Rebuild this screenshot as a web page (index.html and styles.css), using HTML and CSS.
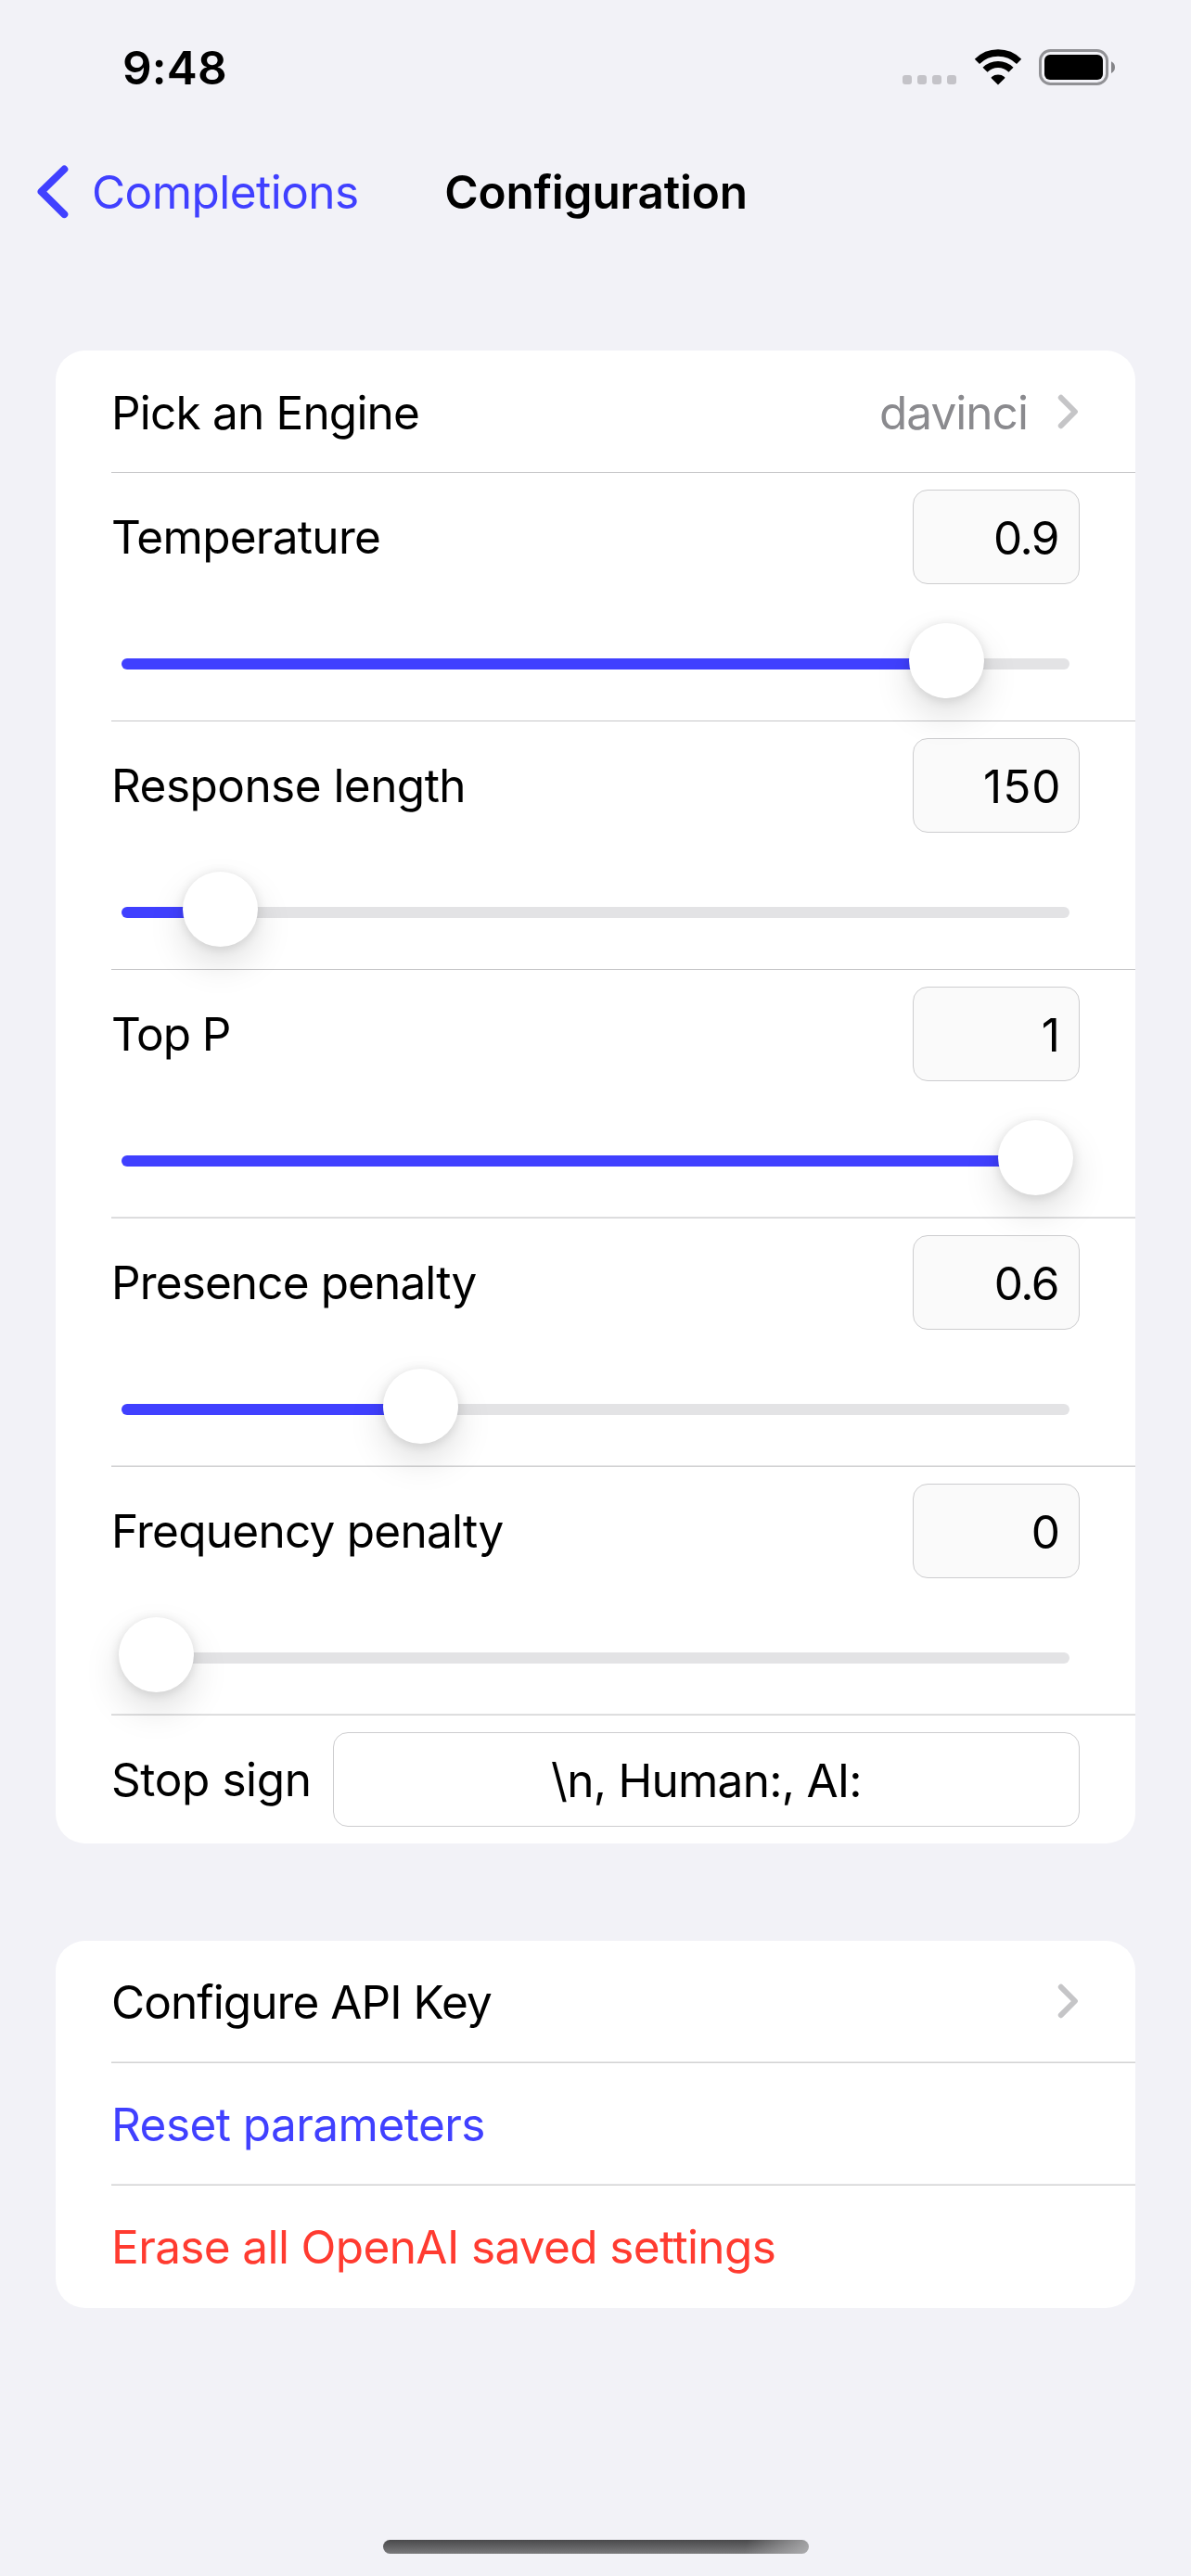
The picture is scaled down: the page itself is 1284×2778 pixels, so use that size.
FILE: index.html
```html
<!DOCTYPE html>
<html lang="en">
<head>
<meta charset="utf-8">
<title>Configuration</title>
<link rel="stylesheet" href="styles.css">
</head>
<body>
<header class="status">
  <span class="clock">9:48</span>
  <div class="indicators">
    <div class="cell"><i></i><i></i><i></i><i></i></div>
    <svg class="wifi" width="52" height="40" viewBox="0 0 52 40">
      <path d="M3.4 13.4A32 32 0 0 1 48.6 13.4" fill="none" stroke="#000" stroke-width="7.4"/>
      <path d="M12 22.2A20 20 0 0 1 40 22.2" fill="none" stroke="#000" stroke-width="7.2"/>
      <path d="M26 38.5L18.9 31.4Q18.2 30.6 19 30A11.5 11.5 0 0 1 33 30Q33.8 30.6 33.1 31.4Z"/>
    </svg>
    <svg class="battery" width="84" height="40" viewBox="0 0 84 40">
      <rect x="1.5" y="1.5" width="72" height="36" rx="11" fill="none" stroke="#919195" stroke-width="3"/>
      <rect x="6" y="6" width="63" height="27" rx="6"/>
      <path d="M78 13.2Q82 15.2 82 19.6Q82 24 78 26Z" fill="#848488"/>
    </svg>
  </div>
</header>

<nav class="nav">
  <a class="back">
    <svg width="36" height="60" viewBox="0 0 36 60"><path d="M29.3 6L4.6 30.2L29.3 54.6" transform="translate(0 -.5)"/></svg>
    <span>Completions</span>
  </a>
  <h1 class="title">Configuration</h1>
</nav>

<main class="content">
  <section class="card">
    <div class="row link">
      <span class="label engine">Pick an Engine</span>
      <span class="detail">davinci</span>
      <svg class="chevron" width="24" height="38" viewBox="0 0 24 38"><path d="M3.8 3.8L18.9 19L3.8 34.2"/></svg>
    </div>
    <div class="row param">
      <div class="head"><span class="label temperature">Temperature</span><span class="field decimal">0.9</span></div>
      <div class="slider" style="--value:.899"><div class="track"></div><div class="thumb"></div></div>
    </div>
    <div class="row param">
      <div class="head"><span class="label length">Response length</span><span class="field hundreds">150</span></div>
      <div class="slider" style="--value:.0728"><div class="track"></div><div class="thumb"></div></div>
    </div>
    <div class="row param soft">
      <div class="head"><span class="label top-p">Top P</span><span class="field">1</span></div>
      <div class="slider" style="--value:1"><div class="track"></div><div class="thumb"></div></div>
    </div>
    <div class="row param soft">
      <div class="head"><span class="label presence">Presence penalty</span><span class="field decimal">0.6</span></div>
      <div class="slider" style="--value:.3006"><div class="track"></div><div class="thumb"></div></div>
    </div>
    <div class="row param soft">
      <div class="head"><span class="label frequency">Frequency penalty</span><span class="field">0</span></div>
      <div class="slider" style="--value:0"><div class="track"></div><div class="thumb"></div></div>
    </div>
    <div class="row stop">
      <div class="head"><span class="label sign">Stop sign</span><span class="field wide">\n, Human:, AI:</span></div>
    </div>
  </section>

  <section class="card actions">
    <div class="row link soft">
      <span class="label api">Configure API Key</span>
      <svg class="chevron" width="24" height="38" viewBox="0 0 24 38"><path d="M3.8 3.8L18.9 19L3.8 34.2"/></svg>
    </div>
    <div class="row link soft"><span class="label reset">Reset parameters</span></div>
    <div class="row link"><span class="label erase">Erase all OpenAI saved settings</span></div>
  </section>
</main>

<div class="home"></div>
</body>
</html>
```
FILE: styles.css
```css
* { box-sizing: border-box; }

body {
  margin: 0;
  height: 2778px;
  display: flex;
  flex-direction: column;
  background: #f2f2f7;
  color: #000;
  font-family: "Inter", "Liberation Sans", sans-serif;
  font-size: 49.5px;
  line-height: 60px;
  white-space: nowrap;
}

svg { display: block; flex: none; }

/* Status bar */
.status {
  height: 141px;
  padding: 43px 80px 0 132px;
  display: flex;
  justify-content: space-between;
  align-items: flex-start;
}
.clock { font-weight: 600; letter-spacing: .2px; }
.indicators { display: flex; padding-top: 10px; }
.cell { display: flex; gap: 6px; padding-top: 28px; margin-right: 19px; }
.cell i { width: 10px; height: 10px; border-radius: 3px; background: #c4c3c8; }
.wifi { margin-right: 18px; }

/* Navigation bar */
.nav {
  height: 237px;
  padding: 36px 39px 0 40px;
  display: grid;
  grid-template-columns: 1fr auto 1fr;
  align-items: start;
}
.back { display: flex; gap: 23px; color: #4040ff; letter-spacing: -.55px; }
.back path {
  fill: none;
  stroke: #4040ff;
  stroke-width: 8;
  stroke-linecap: round;
  stroke-linejoin: round;
}
.title { margin: 0; font-size: inherit; font-weight: 600; letter-spacing: -.2px; }

/* Grouped cards */
.content { display: flex; flex-direction: column; gap: 105px; padding: 0 60px; }
.card { padding-left: 60px; border-radius: 32px; background: #fff; }
.row { padding-right: 60px; border-bottom: 1px solid #c6c6c8; }
.row.soft { border-bottom-color: #d3d3d4; box-shadow: inset 0 -1px #e6e6e7; }
.row:last-child { border-bottom-color: transparent; }

.link { height: 132px; padding-top: 37px; display: flex; align-items: flex-start; }
.actions .link { padding-top: 36px; }
.detail { margin-left: auto; margin-right: 32px; color: #8a8a8e; letter-spacing: -.95px; }
.chevron { margin-top: 10px; }
.label + .chevron { margin-left: auto; }
.chevron path {
  fill: none;
  stroke: #c5c5c7;
  stroke-width: 6;
  stroke-linecap: round;
  stroke-linejoin: round;
}

.param { height: 268px; padding-top: 18px; }
.stop { height: 138px; padding-top: 18px; }
.head { display: flex; height: 102px; }
.head .label { flex: 1; padding-top: 21px; }
.field {
  width: 180px;
  padding: 21px 20px 0;
  border: 1px solid #cdcdcf;
  border-radius: 16px;
  background: #fafafa;
  text-align: right;
}
.field.decimal { padding-right: 22px; letter-spacing: -1.5px; }
.field.hundreds { padding-right: 18.5px; letter-spacing: 1px; }
.field.wide { width: 805px; background: #fff; text-align: center; letter-spacing: -.74px; }

/* Slider */
.slider {
  position: relative;
  width: 1029px;
  height: 81px;
  margin: 42px 0 0 8px;
  padding: 38px 4px 0 3px;
}
.track {
  height: 12px;
  border-radius: 6px;
  background: linear-gradient(#4040ff, #4040ff) no-repeat #e3e3e5;
  background-size: calc(948px * var(--value) + 37px * min(1, var(--value) * 1000)) 100%;
}
.thumb {
  position: absolute;
  top: 0;
  left: calc(948px * var(--value));
  width: 81px;
  height: 81px;
  border-radius: 50%;
  background: #fff;
  box-shadow: 0 1.5px 12px rgba(0, 0, 0, .12), 0 18px 39px rgba(0, 0, 0, .13);
}

/* Tracking per label */
.engine { letter-spacing: -.81px; }
.temperature { letter-spacing: -.72px; }
.length { letter-spacing: -.54px; }
.top-p { letter-spacing: -1.07px; }
.presence { letter-spacing: -.88px; }
.frequency { letter-spacing: -.74px; }
.sign { letter-spacing: -.4px; }
.api { letter-spacing: -.93px; }
.reset { letter-spacing: -.55px; color: #4040ff; }
.erase { letter-spacing: -.62px; color: #ff3b30; }

/* Home indicator */
.home {
  width: 459px;
  height: 15px;
  margin: auto auto 24px 413px;
  border-radius: 7.5px;
  background:
    linear-gradient(100deg, transparent 85%, rgba(190, 190, 192, .75) 100%),
    linear-gradient(#49494b, #7a7a7c);
}
```
